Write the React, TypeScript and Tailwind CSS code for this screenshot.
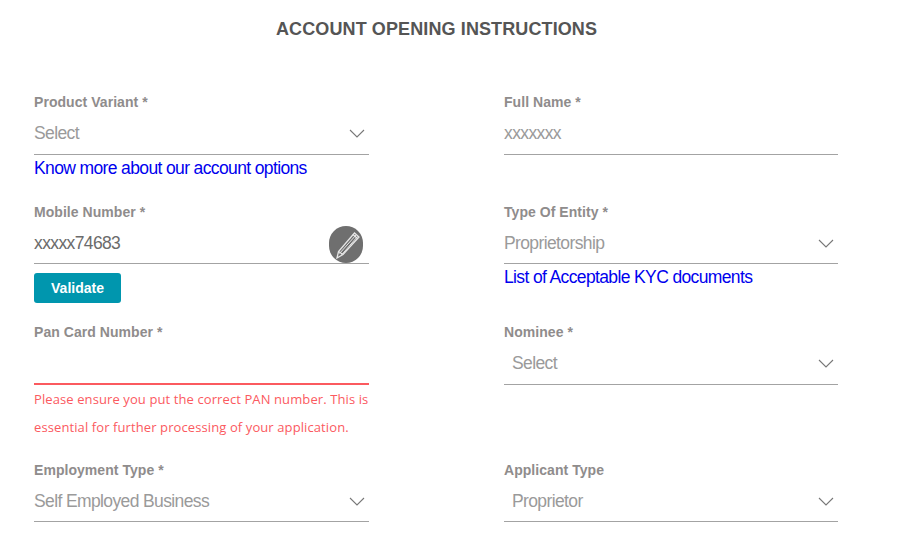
import type { ReactNode } from "react";

const sans = "font-['Liberation_Sans',Arial,sans-serif]";

function Chevron() {
    return (
        <svg viewBox="0 0 16 9" className="mr-[4px] h-[9px] w-[16px]" fill="none" stroke="#777777" strokeWidth="1.1">
            <path d="M1 1l7 7 7-7" />
        </svg>
    );
}

function Field({ label, value, muted = true, select = false, indent = false, height = "h-[62px]", children }: {
    label: string;
    value?: string;
    muted?: boolean;
    select?: boolean;
    indent?: boolean;
    height?: string;
    children?: ReactNode;
}) {
    return (
        <div className={`relative flex flex-col border-b border-[#a3a3a3] ${height}`}>
            <label className="h-[19px] text-[14px] leading-[19px] font-bold tracking-[0.05px] text-[#8f8c8c]">{label}</label>
            <div className={`flex h-[40px] items-center justify-between pt-[2px] text-[17.5px] tracking-[-0.62px] ${muted ? "text-[#9a9a9a]" : "text-[#6b6b6b]"} ${indent ? "pl-2" : ""}`}>
                <span>{value}</span>
                {select && <Chevron />}
            </div>
            {children}
        </div>
    );
}

function KnowLink({ text }: { text: string }) {
    return <a className="mt-[1px] block text-[17.5px] leading-[24px] tracking-[-0.63px] text-[#0000ee]">{text}</a>;
}

export default function App() {
    return (
        <div className={`h-[540px] w-[897px] overflow-hidden bg-white ${sans}`}>
            <h1 className="pt-[18px] pl-[276px] text-[18px] leading-[22px] font-bold tracking-[0.11px] text-[#555555]">
                ACCOUNT OPENING INSTRUCTIONS
            </h1>
            <div className="mt-[53px] ml-[34px] grid w-[804px] grid-cols-[335px_334px] grid-rows-[110px_120px_138px_auto] gap-x-[135px]">
                <div>
                    <Field label="Product Variant *" value="Select" select />
                    <KnowLink text="Know more about our account options" />
                </div>
                <div>
                    <Field label="Full Name *" value="xxxxxxx" />
                </div>
                <div>
                    <Field label="Mobile Number *" value="xxxxx74683" muted={false} height="h-[61px]">
                        <span className="absolute top-[23px] right-[6px] flex h-[37px] w-[34px] items-center justify-center rounded-full bg-[#6f6f6f]">
                            <svg viewBox="0 0 34 37" className="h-[37px] w-[34px]" fill="none" stroke="#e6e6e6" strokeWidth="1.3">
                                <path d="M8 32l1.5-6.5L25.5 7l4.5 4L14 28.5z" />
                                <path d="M10.5 27.5L27 9M12.5 29L28.5 10.5" strokeWidth="1" />
                                <path d="M9.5 25.5l4.5 3M24 8.5l4.5 4" />
                            </svg>
                        </span>
                    </Field>
                    <button className="mt-[9px] h-[30px] w-[87px] rounded-[3px] bg-[#0096ae] text-[14px] font-bold text-white">Validate</button>
                </div>
                <div>
                    <Field label="Type Of Entity *" value="Proprietorship" select height="h-[61px]" />
                    <KnowLink text="List of Acceptable KYC documents" />
                </div>
                <div>
                    <div className="relative flex h-[62px] flex-col border-b-2 border-[#fb5a5f]">
                        <label className="h-[19px] text-[14px] leading-[19px] font-bold tracking-[0.05px] text-[#8f8c8c]">Pan Card Number *</label>
                    </div>
                    <p className="font-['Open_Sans',sans-serif] text-[13px] leading-[28px] tracking-[0.1px] text-[#fb5a5f]">
                        Please ensure you put the correct PAN number. This is essential for further processing of your application.
                    </p>
                </div>
                <div>
                    <Field label="Nominee *" value="Select" select indent />
                </div>
                <div>
                    <Field label="Employment Type *" value="Self Employed Business" select height="h-[61px]" />
                </div>
                <div>
                    <Field label="Applicant Type" value="Proprietor" select indent height="h-[61px]" />
                </div>
            </div>
        </div>
    );
}
